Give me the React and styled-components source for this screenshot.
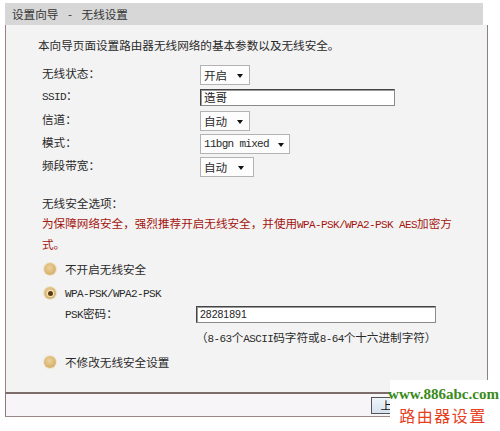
import React from "react";
import styled, { createGlobalStyle, css } from "styled-components";

const GlobalStyle = createGlobalStyle`
  html, body { margin: 0; padding: 0; background: #ffffff; }
  body {
    font-family: "Noto Sans CJK SC", "Liberation Sans", sans-serif;
    font-size: 11.6px;
    color: #2a2a2a;
  }
  * { box-sizing: border-box; }
`;

const Page = styled.div`
  position: relative;
  width: 500px;
  height: 431px;
  padding: 3px 0 0 5px;
  overflow: hidden;
`;

const Panel = styled.div`
  width: 483px;
  display: flex;
  flex-direction: column;
`;

const Header = styled.div`
  width: 478px;
  height: 22px;
  line-height: 22px;
  background: #d7d7d7;
  padding-left: 7px;
  color: #333;
  font-size: 11.6px;
  white-space: pre;
  word-spacing: 7px;
`;

const Body = styled.div`
  border-left: 1px solid #a17f7f;
  border-right: 1px solid #8c8080;
  background: #f3f3f3;
  padding: 11px 0 18px 36px;
  display: flex;
  flex-direction: column;
`;

const Latin = styled.span`
  font-family: "Liberation Mono", monospace;
  font-size: 11px;
  letter-spacing: -0.6px;
`;

const Intro = styled.div`
  line-height: 18px;
  margin-left: -4px;
`;

const FormGrid = styled.div`
  margin-top: 9px;
  display: grid;
  grid-template-columns: 158px auto;
  grid-auto-rows: 23px;
  align-items: center;
`;

const Label = styled.div`
  line-height: 18px;
  margin-top: -3px;
`;

const SelectBox = styled.div`
  position: relative;
  width: ${(p) => p.$w}px;
  height: 20px;
  border: 1px solid #b3b3b3;
  background: #fdfdfd;
  padding-left: 3px;
  line-height: 18px;
  font-size: ${(p) => (p.$mono ? "11px" : "11.6px")};
  ${(p) =>
    p.$mono &&
    css`
      font-family: "Liberation Mono", monospace;
      letter-spacing: -0.7px;
    `}
  &::after {
    content: "";
    position: absolute;
    right: ${(p) => p.$arrowRight}px;
    top: 8px;
    border-left: 3.5px solid transparent;
    border-right: 3.5px solid transparent;
    border-top: 4px solid #111;
  }
`;

const TextInput = styled.div`
  width: ${(p) => p.$w}px;
  height: ${(p) => p.$h}px;
  border: 1px solid #8a8a8a;
  border-top-color: #444;
  border-left-color: #444;
  box-shadow: inset 1px 1px 0 #9a9a9a;
  background: #ffffff;
  padding-left: 3px;
  line-height: ${(p) => p.$h - 2}px;
  font-size: ${(p) => (p.$latin ? "10.5px" : "11.6px")};
  font-family: ${(p) =>
    p.$latin ? '"Liberation Sans", sans-serif' : '"Noto Sans CJK SC", sans-serif'};
  color: #222;
`;

const SectionTitle = styled.div`
  margin-top: 16px;
  line-height: 18px;
`;

const Warning = styled.div`
  margin-top: 2px;
  width: 415px;
  line-height: 19px;
  color: #a3150f;
`;

const RadioRow = styled.div`
  display: flex;
  align-items: center;
  height: 24px;
  margin-top: ${(p) => p.$mt || 0}px;
  padding-left: 2px;
  gap: 9px;
`;

const RadioDot = styled.span`
  position: relative;
  width: 12px;
  height: 12px;
  border-radius: 50%;
  background: radial-gradient(circle at 45% 40%, #ecd29d 0%, #d6b06a 70%, #c49a55 100%);
  box-shadow: 0 0 0 1px #efe4cc;
  flex: none;
  ${(p) =>
    p.$checked &&
    css`
      &::after {
        content: "";
        position: absolute;
        left: 3.5px;
        top: 3.5px;
        width: 5px;
        height: 5px;
        border-radius: 50%;
        background: #5a3c0c;
        box-shadow: 0 0 0 1px #f4e6c4;
      }
    `}
`;

const RadioLabel = styled.span`
  line-height: 18px;
`;

const PskRow = styled.div`
  display: flex;
  align-items: center;
  height: 18px;
  padding-left: 23px;
`;

const PskLabel = styled.div`
  width: 131px;
  line-height: 18px;
`;

const Hint = styled.div`
  margin-top: 5px;
  margin-left: 154px;
  line-height: 18px;
`;

const Footer = styled.div`
  height: 25px;
  border-left: 1px solid #8f7878;
  border-top: 2px solid #7d6c6c;
  border-bottom: 1px solid #9a8787;
  background: #f7f5f7;
  display: flex;
  align-items: center;
  justify-content: flex-end;
  gap: 5px;
  padding-right: 4px;
`;

const Button = styled.div`
  width: 54px;
  height: 17px;
  border: 1px solid #555;
  background: linear-gradient(#eef4fa, #d6e3f0);
  text-align: center;
  line-height: 15px;
  font-size: 11.6px;
  color: #111;
`;

const Watermark = styled.div`
  position: absolute;
  left: 390px;
  top: 380px;
  width: 110px;
  height: 51px;
  background: #ffffff;
  display: flex;
  flex-direction: column;
  align-items: center;
  padding-top: 4px;
`;

const WmUrl = styled.div`
  font-family: "Liberation Serif", serif;
  font-weight: bold;
  font-size: 15px;
  line-height: 20px;
  color: #3a8a1c;
  margin-left: -3px;
`;

const WmTitle = styled.div`
  font-family: "Noto Sans CJK SC", sans-serif;
  font-size: 16px;
  line-height: 22px;
  letter-spacing: 1.5px;
  color: #e6401e;
  margin-left: -4px;
`;

const rows = [
  { label: "无线状态：", kind: "select", value: "开启", w: 50, arrow: 6 },
  { label: <><Latin>SSID</Latin>：</>, kind: "input", value: "造哥", w: 195 },
  { label: "信道：", kind: "select", value: "自动", w: 50, arrow: 6 },
  { label: "模式：", kind: "select", value: "11bgn mixed", w: 90, arrow: 5, mono: true },
  { label: "频段带宽：", kind: "select", value: "自动", w: 54, arrow: 9 },
];

export default function App() {
  return (
    <>
      <GlobalStyle />
      <Page>
        <Panel>
          <Header>设置向导 - 无线设置</Header>
          <Body>
            <Intro>本向导页面设置路由器无线网络的基本参数以及无线安全。</Intro>
            <FormGrid>
              {rows.map((r, i) => (
                <React.Fragment key={i}>
                  <Label>{r.label}</Label>
                  {r.kind === "select" ? (
                    <SelectBox $w={r.w} $arrowRight={r.arrow} $mono={r.mono}>
                      {r.value}
                    </SelectBox>
                  ) : (
                    <TextInput $w={r.w} $h={17}>{r.value}</TextInput>
                  )}
                </React.Fragment>
              ))}
            </FormGrid>
            <SectionTitle>无线安全选项：</SectionTitle>
            <Warning>
              为保障网络安全，强烈推荐开启无线安全，并使用<Latin>WPA-PSK/WPA2-PSK AES</Latin>加密方式。
            </Warning>
            <RadioRow $mt={3}>
              <RadioDot />
              <RadioLabel>不开启无线安全</RadioLabel>
            </RadioRow>
            <RadioRow>
              <RadioDot $checked />
              <RadioLabel><Latin>WPA-PSK/WPA2-PSK</Latin></RadioLabel>
            </RadioRow>
            <PskRow>
              <PskLabel><Latin>PSK</Latin>密码：</PskLabel>
              <TextInput $w={240} $h={17} $latin>28281891</TextInput>
            </PskRow>
            <Hint>（<Latin>8-63</Latin>个<Latin>ASCII</Latin>码字符或<Latin>8-64</Latin>个十六进制字符）</Hint>
            <RadioRow $mt={2}>
              <RadioDot />
              <RadioLabel>不修改无线安全设置</RadioLabel>
            </RadioRow>
          </Body>
          <Footer>
            <Button>上一步</Button>
            <Button>下一步</Button>
          </Footer>
        </Panel>
        <Watermark>
          <WmUrl>www.886abc.com</WmUrl>
          <WmTitle>路由器设置</WmTitle>
        </Watermark>
      </Page>
    </>
  );
}
